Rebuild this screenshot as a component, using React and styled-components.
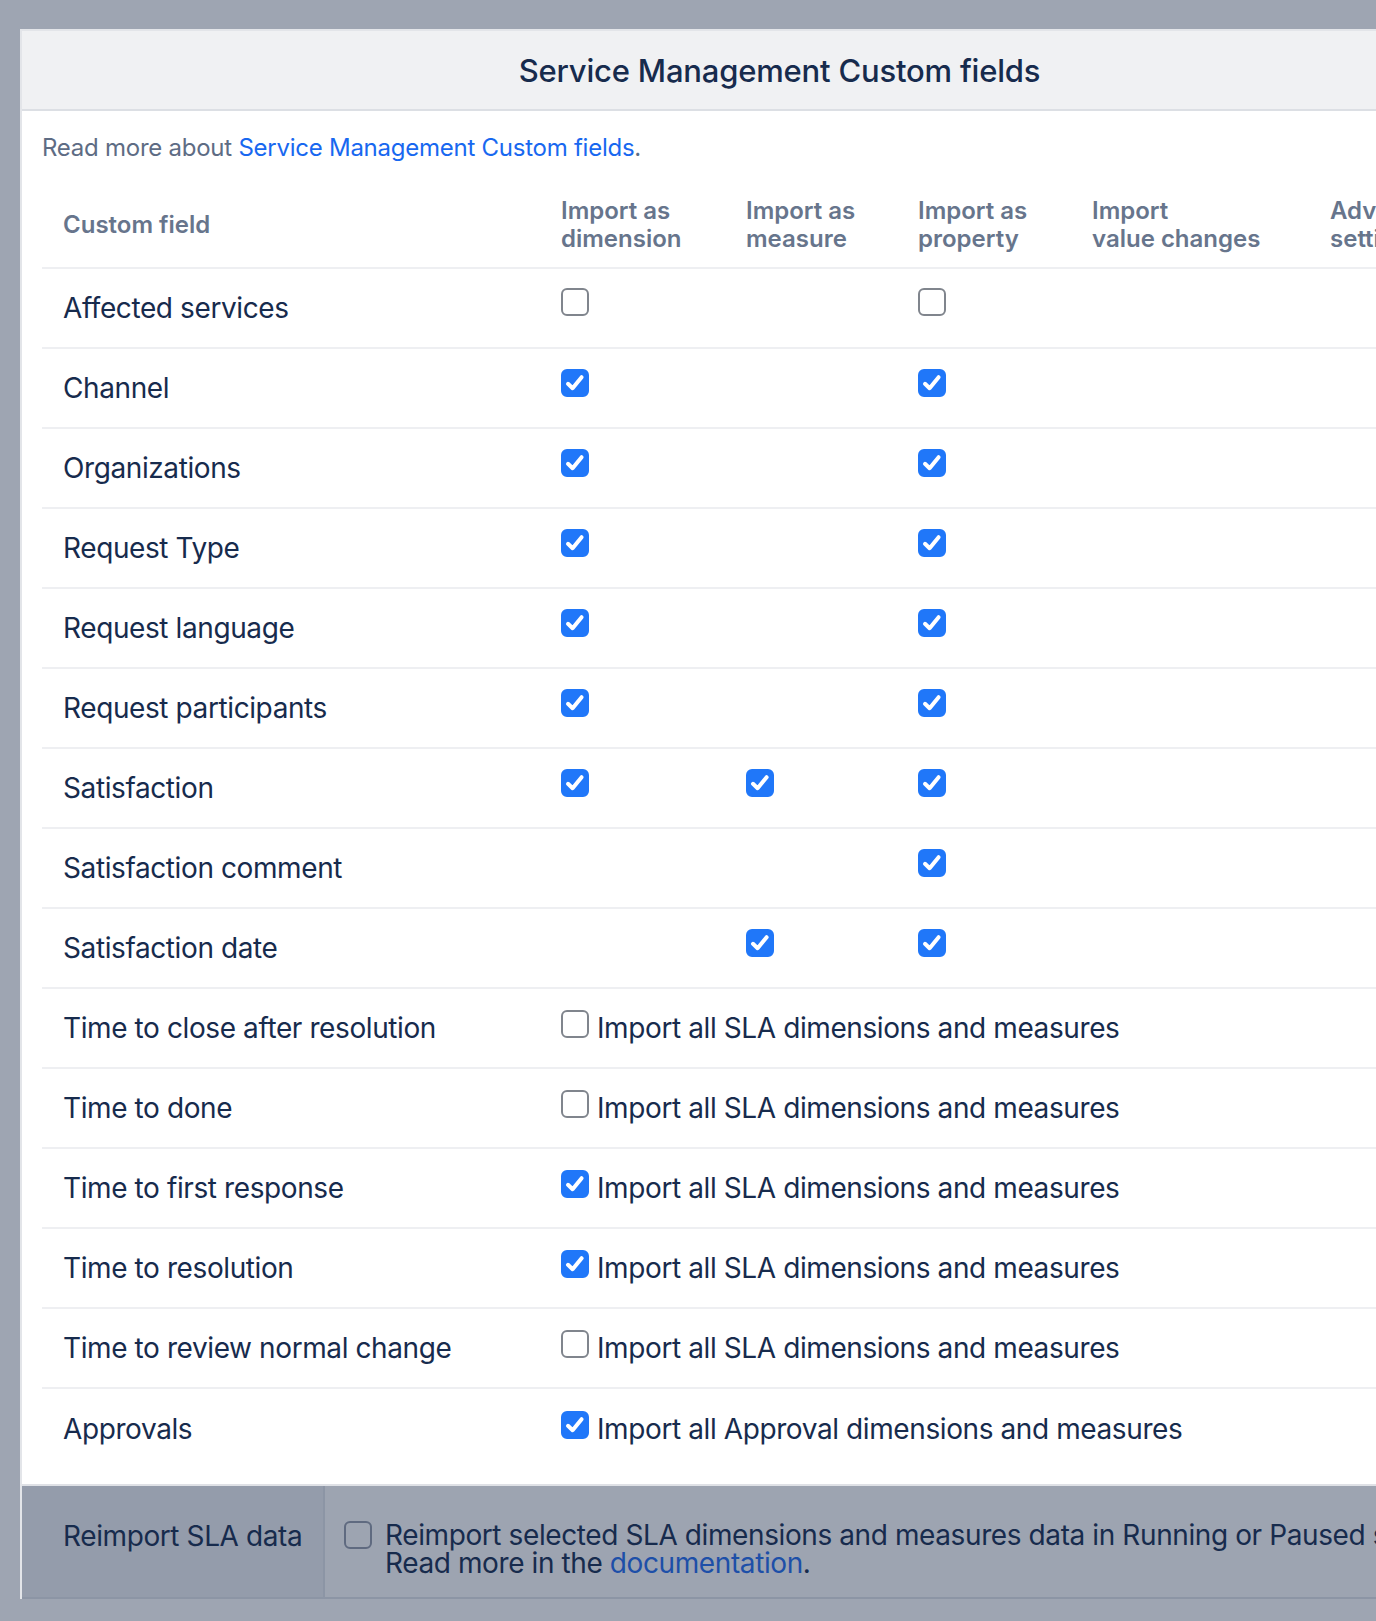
import React from 'react';
import styled, { createGlobalStyle } from 'styled-components';

const GlobalStyle = createGlobalStyle`
  html,
  body {
    margin: 0;
    padding: 0;
    background: #9ea5b2;
    overflow: hidden;
  }
  body {
    font-family: Inter, 'Noto Sans', 'Liberation Sans', sans-serif;
    color: #172b4d;
  }
`;

const Page = styled.div`
  padding: 29px 0 0 20px;
  width: 1600px;
`;

const Panel = styled.section`
  width: 1515px;
  background: #ffffff;
  border-top: 2px solid #e3e5e9;
  border-left: 2px solid #e3e5e9;
`;

const PanelHeader = styled.header`
  height: 78px;
  display: flex;
  align-items: center;
  justify-content: center;
  background: #f0f1f3;
  border-bottom: 2px solid #dcdfe4;
`;

const Title = styled.h1`
  margin: 0;
  font-size: 31px;
  font-weight: 500;
  color: #172b4d;
  letter-spacing: -0.2px;
`;

const PanelBody = styled.div`
  padding: 23px 20px 16px;
`;

const Intro = styled.p`
  margin: 0 0 21px 0;
  font-size: 24px;
  line-height: 28px;
  letter-spacing: -0.25px;
  color: #5e6c84;
`;

const Link = styled.a`
  color: ${(p) => (p.$muted ? '#1d4fa8' : '#1868f0')};
  text-decoration: none;
`;

const FieldTable = styled.table`
  width: 1473px;
  table-layout: fixed;
  border-collapse: collapse;
`;

const HeadCell = styled.th`
  box-sizing: border-box;
  width: ${(p) => p.$w}px;
  padding: 14px 0 14px 21px;
  text-align: left;
  vertical-align: middle;
  font-size: 24px;
  line-height: 28px;
  font-weight: 600;
  color: #67758c;
  white-space: nowrap;
  overflow: hidden;
  border-bottom: 2px solid #eeeff2;
`;

const Row = styled.tr`
  height: 80px;
  border-bottom: ${(p) => (p.$last ? 'none' : '2px solid #eeeff2')};
`;

const Cell = styled.td`
  padding: 0 0 0 21px;
  vertical-align: middle;
  font-size: 28px;
  line-height: 32px;
  letter-spacing: -0.4px;
  color: #172b4d;
  white-space: nowrap;
`;

const BoxSlot = styled.div`
  display: block;
  margin-top: -7px;
`;

const InlineOption = styled.label`
  display: flex;
  align-items: center;
  gap: 8px;

  & > span:first-child {
    margin-bottom: 8px;
  }
`;

const Box = styled.span`
  display: inline-flex;
  align-items: center;
  justify-content: center;
  box-sizing: border-box;
  width: 28px;
  height: 28px;
  flex: none;
  border-radius: 6px;
  background: ${(p) => (p.$checked ? '#2077f9' : p.$dark ? 'transparent' : '#ffffff')};
  border: 2px solid
    ${(p) => (p.$checked ? '#2077f9' : p.$dark ? '#5f6a80' : '#80858d')};

  svg {
    display: block;
  }
`;

const Footer = styled.div`
  display: flex;
  border-top: 2px solid #dfe1e6;
  border-bottom: 2px solid #8c95a5;
  height: 111px;
  background: #9da4b1;
`;

const FooterLabel = styled.div`
  width: 260px;
  flex: none;
  padding: 36px 0 0 41px;
  background: #949cab;
  border-right: 2px solid #8c95a5;
  font-size: 28px;
  line-height: 28px;
  letter-spacing: -0.4px;
  color: #172b4d;
  white-space: nowrap;
`;

const FooterOption = styled.div`
  display: flex;
  align-items: flex-start;
  gap: 13px;
  padding: 35px 0 0 19px;
  font-size: 28px;
  line-height: 28px;
  letter-spacing: -0.4px;
  color: #172b4d;
  white-space: nowrap;
`;

const Checkbox = ({ checked, dark }) => (
  <Box $checked={checked} $dark={dark}>
    {checked && (
      <svg width="24" height="24" viewBox="0 0 24 24">
        <path
          d="M5 12.8 L9.6 17.2 L18.6 6.2"
          fill="none"
          stroke="#ffffff"
          strokeWidth="4"
          strokeLinecap="round"
          strokeLinejoin="round"
        />
      </svg>
    )}
  </Box>
);

const columns = [
  { key: 'name', w: 498, label: ['Custom field'] },
  { key: 'dim', w: 185, label: ['Import as', 'dimension'] },
  { key: 'measure', w: 172, label: ['Import as', 'measure'] },
  { key: 'prop', w: 174, label: ['Import as', 'property'] },
  { key: 'changes', w: 238, label: ['Import', 'value changes'] },
  { key: 'adv', w: 206, label: ['Advanced', 'settings'] },
];

// null = not importable for that column
const fields = [
  { name: 'Affected services', dim: false, measure: null, prop: false },
  { name: 'Channel', dim: true, measure: null, prop: true },
  { name: 'Organizations', dim: true, measure: null, prop: true },
  { name: 'Request Type', dim: true, measure: null, prop: true },
  { name: 'Request language', dim: true, measure: null, prop: true },
  { name: 'Request participants', dim: true, measure: null, prop: true },
  { name: 'Satisfaction', dim: true, measure: true, prop: true },
  { name: 'Satisfaction comment', dim: null, measure: null, prop: true },
  { name: 'Satisfaction date', dim: null, measure: true, prop: true },
];

const slaFields = [
  { name: 'Time to close after resolution', checked: false },
  { name: 'Time to done', checked: false },
  { name: 'Time to first response', checked: true },
  { name: 'Time to resolution', checked: true },
  { name: 'Time to review normal change', checked: false },
];

const BoxCell = ({ value }) => (
  <Cell>
    {value !== null && value !== undefined && (
      <BoxSlot>
        <Checkbox checked={value} />
      </BoxSlot>
    )}
  </Cell>
);

const GroupRow = ({ name, checked, text, last }) => (
  <Row $last={last}>
    <Cell>{name}</Cell>
    <Cell colSpan={5}>
      <InlineOption>
        <Checkbox checked={checked} />
        <span>{text}</span>
      </InlineOption>
    </Cell>
  </Row>
);

const App = () => {
  return (
    <Page>
      <GlobalStyle />
      <Panel>
        <PanelHeader>
          <Title>Service Management Custom fields</Title>
        </PanelHeader>
        <PanelBody>
          <Intro>
            Read more about <Link href="#">Service Management Custom fields</Link>.
          </Intro>
          <FieldTable>
            <thead>
              <tr>
                {columns.map((col) => (
                  <HeadCell key={col.key} $w={col.w}>
                    {col.label.map((line, i) => (
                      <React.Fragment key={line}>
                        {i > 0 && <br />}
                        {line}
                      </React.Fragment>
                    ))}
                  </HeadCell>
                ))}
              </tr>
            </thead>
            <tbody>
              {fields.map((f) => (
                <Row key={f.name}>
                  <Cell>{f.name}</Cell>
                  <BoxCell value={f.dim} />
                  <BoxCell value={f.measure} />
                  <BoxCell value={f.prop} />
                  <Cell />
                  <Cell />
                </Row>
              ))}
              {slaFields.map((f) => (
                <GroupRow
                  key={f.name}
                  name={f.name}
                  checked={f.checked}
                  text="Import all SLA dimensions and measures"
                />
              ))}
              <GroupRow
                name="Approvals"
                checked
                text="Import all Approval dimensions and measures"
                last
              />
            </tbody>
          </FieldTable>
        </PanelBody>
        <Footer>
          <FooterLabel>Reimport SLA data</FooterLabel>
          <FooterOption>
            <Checkbox dark />
            <div>
              Reimport selected SLA dimensions and measures data in Running or Paused state.
              <br />
              Read more in the <Link href="#" $muted>documentation</Link>.
            </div>
          </FooterOption>
        </Footer>
      </Panel>
    </Page>
  );
};

export default App;
